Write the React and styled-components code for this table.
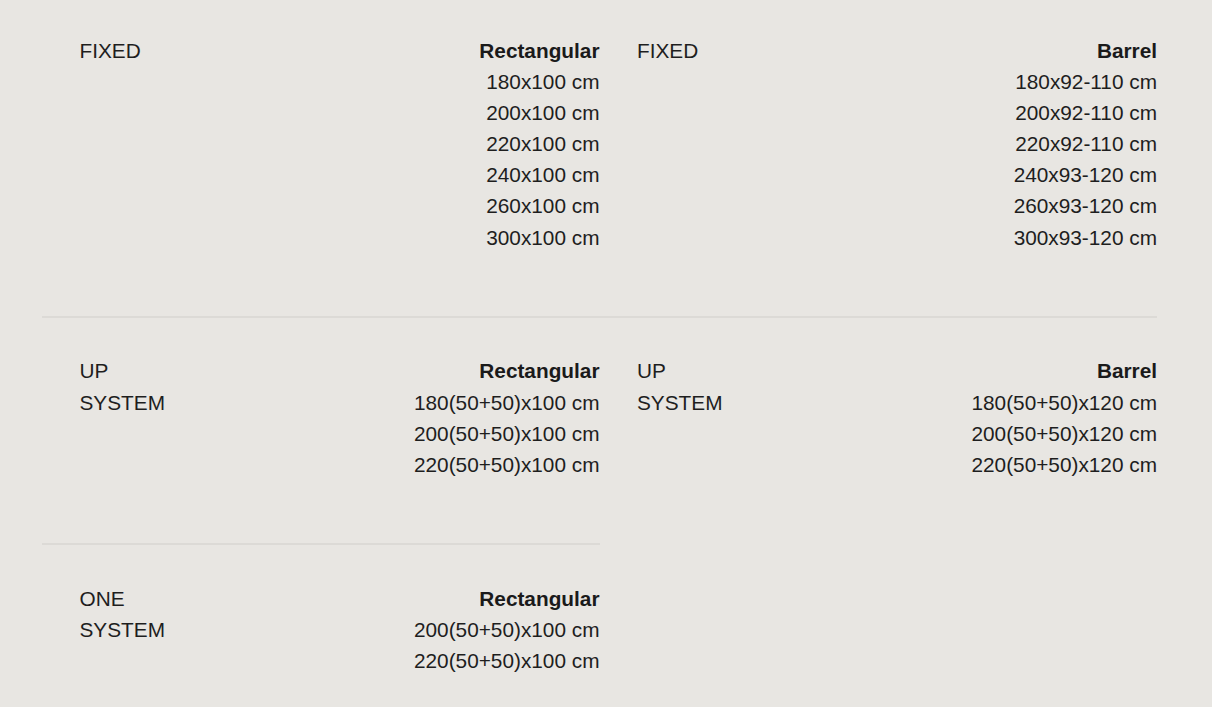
import React from "react";
import styled, { createGlobalStyle } from "styled-components";

const Global = createGlobalStyle`
  html, body { margin: 0; padding: 0; background: #e8e6e2; }
  body { font-family: "Liberation Sans", Arial, sans-serif; color: #1e1e1e; }
`;

const Page = styled.div`
  min-height: 707px;
  background: #e8e6e2;
`;

const Grid = styled.div`
  margin-left: 42px;
  width: 1115px;
  display: grid;
  grid-template-columns: 1fr 1fr;
`;

const Cell = styled.div`
  display: flex;
  justify-content: space-between;
  align-items: flex-start;
  padding: ${(p) => (p.$first ? "34.5px" : "37.5px")} 0 63px 37.5px;
  border-top: ${(p) => (p.$first ? "none" : "2px solid #dcdad6")};
  font-size: 20.8px;
  line-height: 1.5;
`;

const Label = styled.div`
  flex: 0 0 100px;
  text-transform: uppercase;
`;

const Values = styled.div`
  text-align: right;
`;

const Title = styled.div`
  font-weight: 700;
  color: #1a1a1a;
`;

const Line = styled.div``;

const blocks = [
  { label: "Fixed", title: "Rectangular", sizes: ["180x100 cm", "200x100 cm", "220x100 cm", "240x100 cm", "260x100 cm", "300x100 cm"], first: true },
  { label: "Fixed", title: "Barrel", sizes: ["180x92-110 cm", "200x92-110 cm", "220x92-110 cm", "240x93-120 cm", "260x93-120 cm", "300x93-120 cm"], first: true },
  { label: "Up System", title: "Rectangular", sizes: ["180(50+50)x100 cm", "200(50+50)x100 cm", "220(50+50)x100 cm"] },
  { label: "Up System", title: "Barrel", sizes: ["180(50+50)x120 cm", "200(50+50)x120 cm", "220(50+50)x120 cm"] },
  { label: "One System", title: "Rectangular", sizes: ["200(50+50)x100 cm", "220(50+50)x100 cm"] },
];

export default function App() {
  return (
    <Page>
      <Global />
      <Grid>
        {blocks.map((b, i) => (
          <Cell key={i} $first={b.first}>
            <Label>{b.label}</Label>
            <Values>
              <Title>{b.title}</Title>
              {b.sizes.map((s) => (
                <Line key={s}>{s}</Line>
              ))}
            </Values>
          </Cell>
        ))}
      </Grid>
    </Page>
  );
}
